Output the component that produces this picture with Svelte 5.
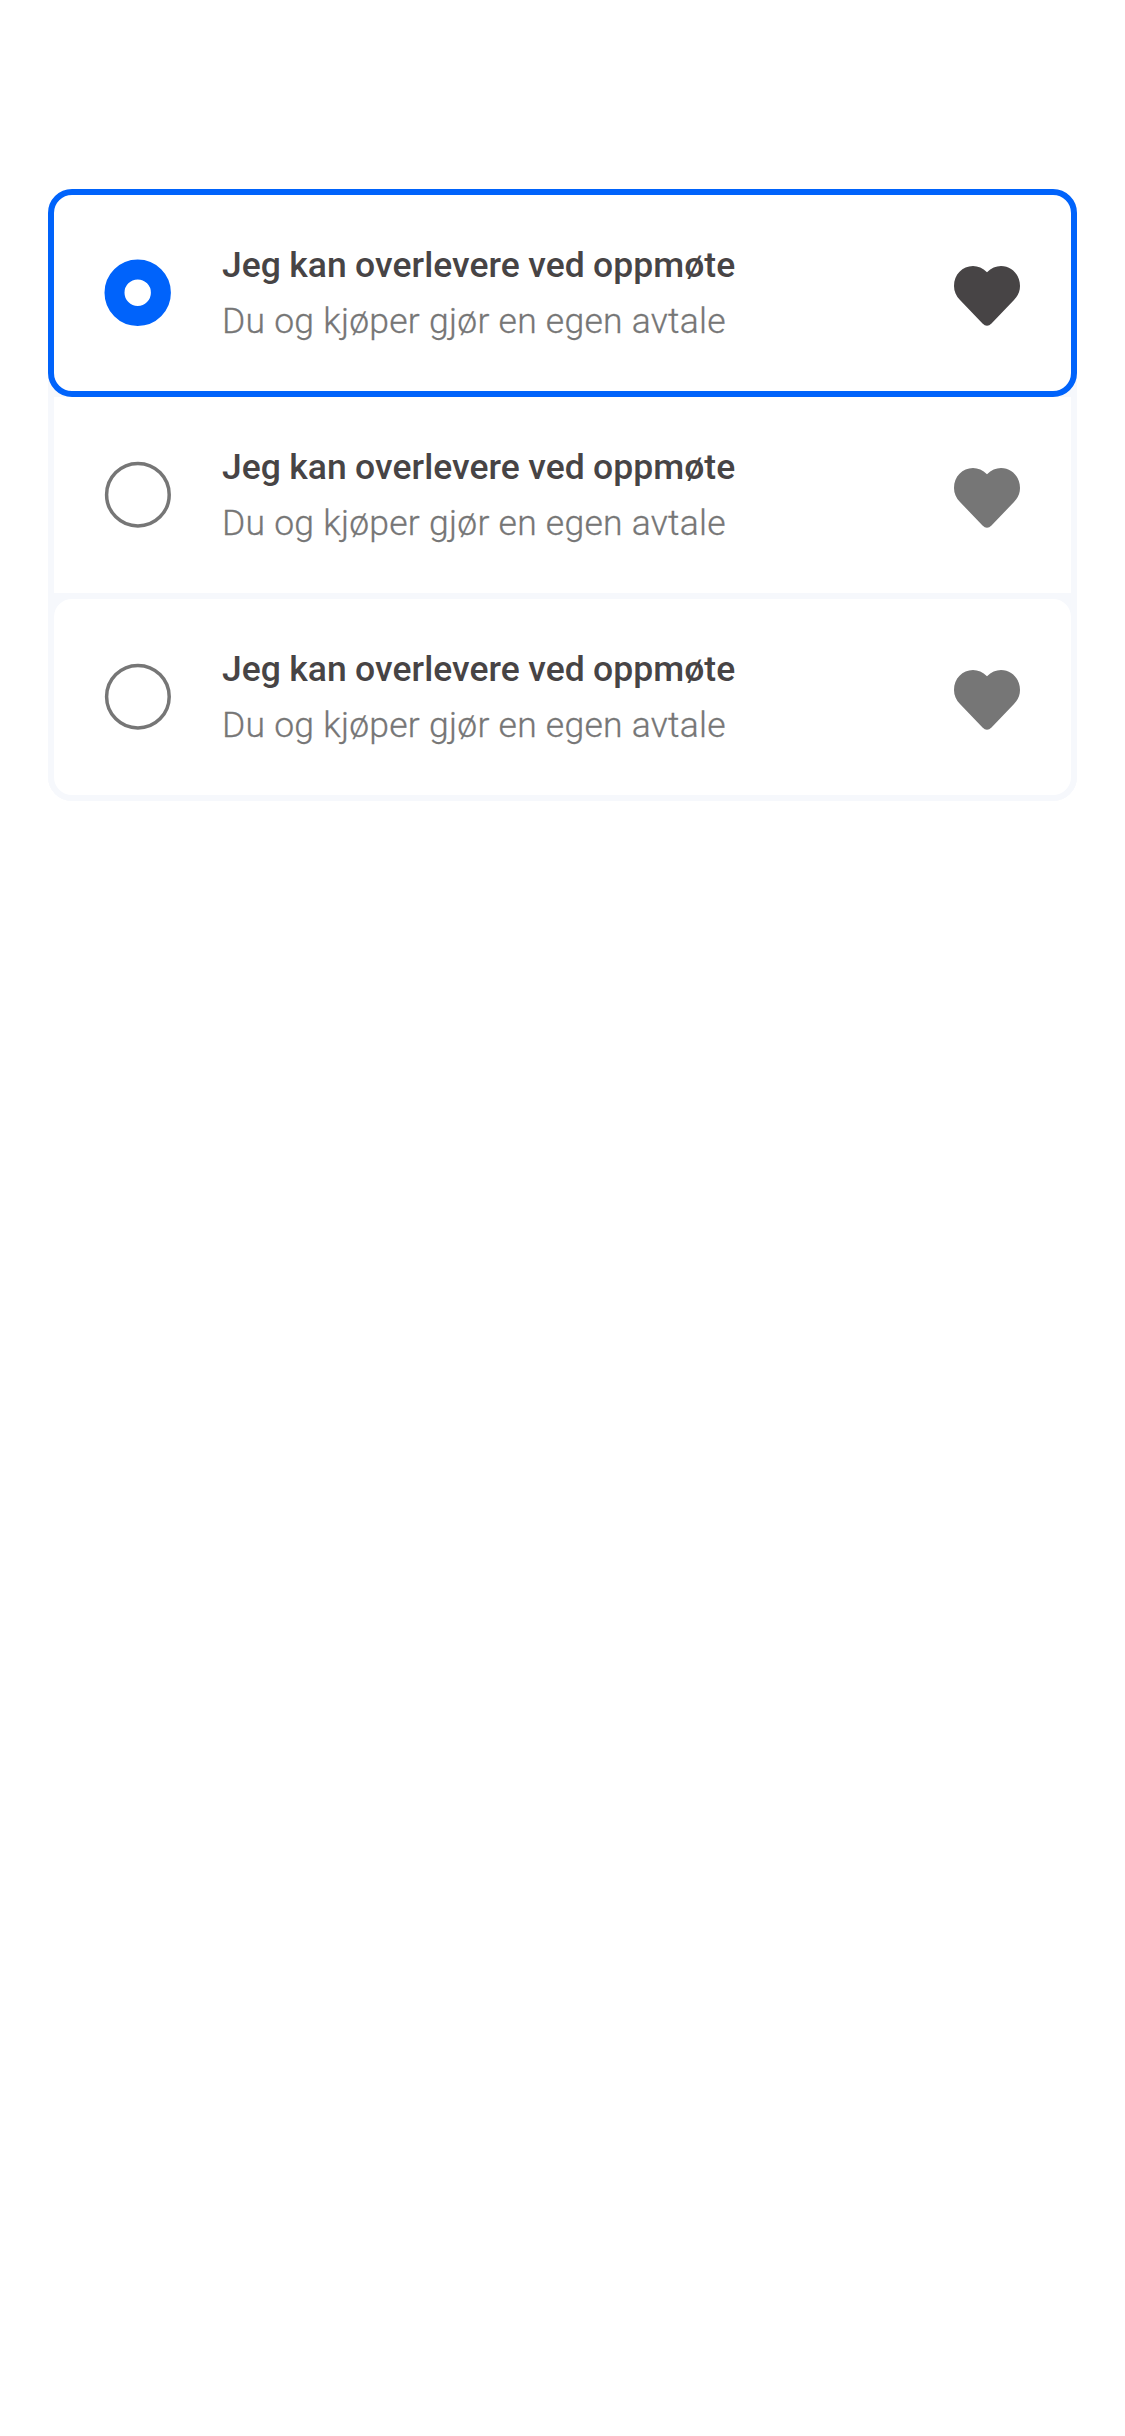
<script>
  const options = [1, 2, 3].map((id) => ({
    id,
    title: 'Jeg kan overlevere ved oppmøte',
    detail: 'Du og kjøper gjør en egen avtale'
  }));
  let selected = $state(1);
</script>

<main>
  <div class="group" role="radiogroup">
    {#each options as option (option.id)}
      <button
        class="option"
        class:selected={selected === option.id}
        class:middle={option.id === 2}
        role="radio"
        aria-checked={selected === option.id}
        onclick={() => (selected = option.id)}
      >
        <svg class="radio" viewBox="0 0 66 66" aria-hidden="true">
          {#if selected === option.id}
            <circle class="on" cx="32.700" cy="32.700" r="23.200" />
          {:else}
            <circle class="off" cx="32.900" cy="32.700" r="31.300" />
          {/if}
        </svg>
        <span class="copy">
          <span class="title">{option.title}</span>
          <span class="detail">{option.detail}</span>
        </span>
        <svg class="heart" viewBox="0 0 66 60" aria-hidden="true">
          <path d="M33 6.3C28.8 2.1 24 0 19 0C8.500 0 0 8.500 0 20C0 25.500 2.200 30 6 34L28.500 57.500Q33 62 37.500 57.500L60 34C63.800 30 66 25.500 66 20C66 8.500 57.500 0 47 0C42 0 37.200 2.100 33 6.300Z" />
        </svg>
      </button>
    {/each}
  </div>
</main>

<style>
  :global(body) {
    background: #fff;
  }
  main {
    padding: 189px 48px 0;
    font-family: Roboto, 'Noto Sans', sans-serif;
  }
  .group {
    display: flex;
    flex-direction: column;
    border-radius: 24px;
    background: #f6f8fc;
  }
  .option {
    box-sizing: border-box;
    display: flex;
    align-items: center;
    height: 208px;
    margin: 0;
    padding: 0 51px;
    border: 6px solid #f6f8fc;
    border-radius: 24px;
    background: #fff;
    font: inherit;
    text-align: left;
  }
  .option + .option {
    margin-top: -6px;
  }
  .middle {
    border-radius: 0;
  }
  .selected {
    position: relative;
    z-index: 1;
    border-color: #0063fb;
    border-radius: 24px;
  }
  .radio {
    flex: none;
    width: 66px;
    height: 66px;
    overflow: visible;
    fill: none;
  }
  .off {
    stroke: #767676;
    stroke-width: 3.5;
  }
  .on {
    stroke: #0063fb;
    stroke-width: 20;
  }
  .copy {
    display: flex;
    flex: 1;
    flex-direction: column;
    margin-left: 51px;
    white-space: nowrap;
  }
  .title,
  .detail {
    font-size: 35.5px;
    line-height: 56px;
  }
  .title {
    color: #474445;
    font-weight: 500;
    letter-spacing: 0.05px;
    word-spacing: -0.6px;
  }
  .detail {
    color: #767676;
    font-weight: 300;
    letter-spacing: 0.26px;
    -webkit-text-stroke: 0.3px #767676;
  }
  .heart {
    flex: none;
    width: 66px;
    height: 60px;
    margin-top: 6px;
    fill: #767676;
  }
  .selected .heart {
    fill: #474445;
  }
</style>
